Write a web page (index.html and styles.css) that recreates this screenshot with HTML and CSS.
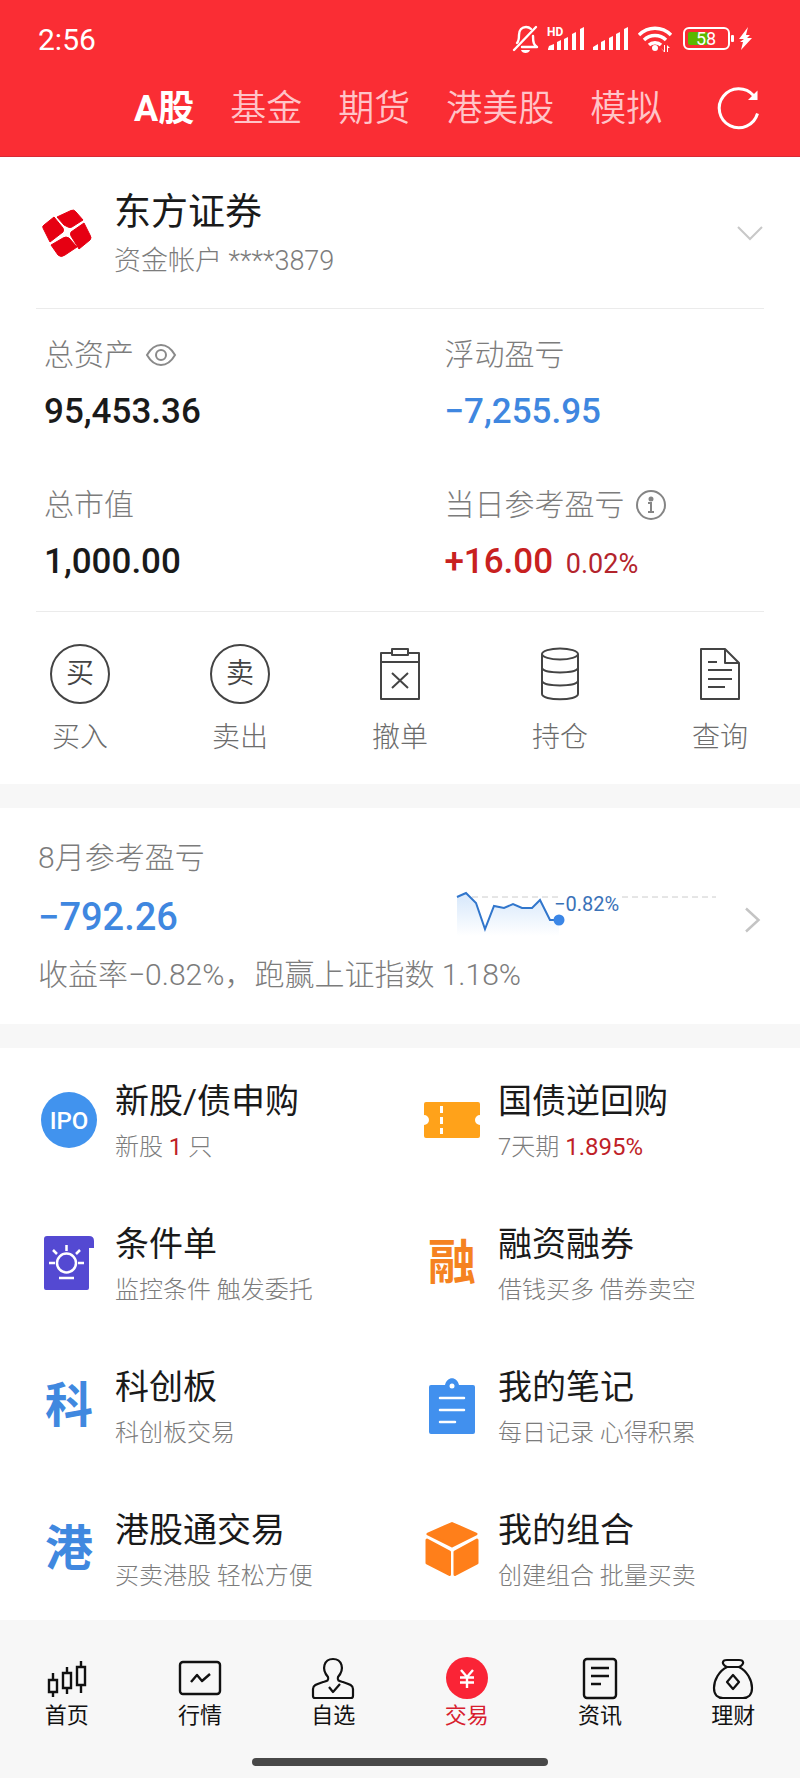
FILE: index.html
```html
<!DOCTYPE html>
<html lang="zh-CN">
<head>
<meta charset="utf-8">
<meta name="viewport" content="width=device-width, initial-scale=1">
<title>交易</title>
<link rel="stylesheet" href="styles.css">
</head>
<body>
<div class="app">
  <header class="header">
    <div class="status">
      <time class="clock">2:56</time>
      <svg class="status-icons" width="246" height="32" viewBox="510 23 246 32" fill="#fff" aria-hidden="true">
        <g fill="none" stroke="#fff" stroke-width="2.4" stroke-linecap="round" stroke-linejoin="round">
          <path d="M517 43c2-2 2-4 2-8 0-5 3-8 7-8 2 0 4 1 5 2"/>
          <path d="M514 50 536 27"/>
          <path d="M522 47h15c-3-2-4-4-4-11"/>
        </g>
        <path d="M521 50h9c-1 4-8 4-9 0z"/>
        <text x="547" y="36" class="status-hd">HD</text>
        <path d="M549 46l5-2v6h-6v-1zM557 42l4-2v10h-4zM564 39l4-2v13h-4zM572 34l4-2v18h-4zM580 29l4-2v23h-4z"/>
        <path d="M593 47l5-3v6h-5zM601 42l4-2v10h-4zM609 38l4-2v14h-4zM616 34l4-2v18h-4zM624 29l4-2v23h-4z"/>
        <g fill="none" stroke="#fff" stroke-width="3.4">
          <path d="M639 35c9-9 23-9 32 0"/>
          <path d="M644 40c6-6 16-6 22 0"/>
          <path d="M649 45c3-3 9-3 12 0"/>
        </g>
        <circle cx="655" cy="48" r="3"/>
        <path d="M661 48l3 3v-6h1v7h-1zM667 52v-7l3 3h-2v4z"/>
        <rect x="684" y="28" width="45" height="21" rx="5" fill="none" stroke="#fff" stroke-width="2"/>
        <rect x="688" y="32" width="20" height="13" rx="2" fill="#5cb800"/>
        <rect x="731" y="35" width="3" height="7" rx="1"/>
        <text x="706" y="45" text-anchor="middle" class="status-level">58</text>
        <path d="M748 27l-9 12h5l-4 3 3 0-2 8 11-12h-5l3-3h-4z"/>
      </svg>
    </div>
    <nav class="tabs">
      <a class="tab tab-active" href="#a">A股</a>
      <a class="tab" href="#fund">基金</a>
      <a class="tab" href="#futures">期货</a>
      <a class="tab" href="#hkus">港美股</a>
      <a class="tab" href="#demo">模拟</a>
      <button class="refresh" type="button" aria-label="刷新">
        <svg width="44" height="44" viewBox="716 86 44 44" fill="none" stroke="#fff" stroke-width="3">
          <path d="M757.500 113.500a19.500 19.500 0 1 1-4-18"/>
          <path d="M757.500 90.500v9.500h-9.500z" fill="#fff" stroke="none"/>
        </svg>
      </button>
    </nav>
  </header>

  <main>
    <section class="panel">
      <button class="account" type="button">
        <svg class="logo" width="50" height="50" viewBox="0 0 50 50" fill="#e60012" stroke="#e60012" stroke-linejoin="round" aria-hidden="true">
          <path d="M16 9 30 2.500Q33 1 35 4l7 8-11 7q-2 1-4 0l-4-2z"/>
          <path d="M3 17l10-8 9 11q1 2 0 4L9 34 2 20q-1-2 1-3z"/>
          <path d="M10 37l12-7q3-2 6 0l8 9-12 8q-4 3-7 0z"/>
          <path d="M43 15l6 12q2 3 0 5L38 41 30 28q-1-2 0-4z"/>
        </svg>
        <span class="account-text">
          <span class="account-name">东方证券</span>
          <span class="account-id">资金帐户 ****3879</span>
        </span>
        <svg class="push" width="26" height="14" viewBox="0 0 26 14" fill="none" stroke="#c8c8c8" stroke-width="2"><path d="M1 1l12 12L25 1"/></svg>
      </button>

      <dl class="metrics">
        <div class="metric">
          <dt>总资产
            <svg width="30" height="22" viewBox="0 0 30 22" fill="none" stroke="#8a8a8a" stroke-width="2"><path d="M1 11C5 4 10 1 15 1s10 3 14 10c-4 7-9 10-14 10S5 18 1 11z"/><circle cx="15" cy="11" r="5"/></svg>
          </dt>
          <dd>95,453.36</dd>
        </div>
        <div class="metric">
          <dt>浮动盈亏</dt>
          <dd class="down">−7,255.95</dd>
        </div>
        <div class="metric">
          <dt>总市值</dt>
          <dd>1,000.00</dd>
        </div>
        <div class="metric">
          <dt>当日参考盈亏
            <svg width="30" height="30" viewBox="0 0 30 30" fill="none" stroke="#858585" stroke-width="2"><circle cx="15" cy="15" r="14"/><path d="M12 13h3v9M12 22h6"/><circle cx="15" cy="9" r="1.500" fill="#858585"/></svg>
          </dt>
          <dd class="up">+16.00 <span class="rate">0.02%</span></dd>
        </div>
      </dl>

      <div class="actions">
        <button class="action" type="button"><span class="action-ring">买</span>买入</button>
        <button class="action" type="button"><span class="action-ring">卖</span>卖出</button>
        <button class="action" type="button">
          <svg width="60" height="60" viewBox="0 0 60 60" fill="none" stroke="#444" stroke-width="2" stroke-linejoin="round"><path d="M22 9H11v46h38V9H38M11 18h38"/><path d="M22 5h16v6H22zM22 29l16 15M38 29 22 44"/></svg>撤单</button>
        <button class="action" type="button">
          <svg width="60" height="60" viewBox="0 0 60 60" fill="none" stroke="#444" stroke-width="2"><ellipse cx="30" cy="10" rx="18" ry="5.500"/><path d="M12 10v40c0 7 36 7 36 0V10M12 24c2 6 34 6 36 0M12 37c2 6 34 6 36 0"/></svg>持仓</button>
        <button class="action" type="button">
          <svg width="60" height="60" viewBox="0 0 60 60" fill="none" stroke="#444" stroke-width="2" stroke-linejoin="round"><path d="M11 5h24l14 14v36H11zM35 5v14h14M18 18h9M18 26h24M18 35h24M18 43h17"/></svg>查询</button>
      </div>
    </section>

    <section class="panel month">
      <h2 class="month-title">8月参考盈亏</h2>
      <div class="month-row">
        <strong class="month-value">−792.26</strong>
        <svg class="chart" width="260" height="50" viewBox="457 892 260 50" aria-hidden="true">
          <defs><linearGradient id="fade" x1="0" y1="0" x2="0" y2="1"><stop offset="0" stop-color="#d9e9fb"/><stop offset="1" stop-color="#fff"/></linearGradient></defs>
          <path d="M457 897l9-4 10 10 9 26 9-23 10 2 9-4 9 4h10l8-8 10 20h9v16H457z" fill="url(#fade)"/>
          <path d="M457 897v39h102v-16h-9l-10-20-8 8h-10l-9-4-9 4-10-2-9 23-9-26z" fill="url(#fade)"/>
          <path d="M472 897h88M622 897h94" stroke="#ccc" stroke-dasharray="6 4" fill="none"/>
          <path d="M457 897l9-4 10 10 9 26 9-23 10 2 9-4 9 4h10l8-8 10 20h9" fill="none" stroke="#3176cc" stroke-width="2"/>
          <circle cx="559" cy="920" r="5.500" fill="#3b86e6"/>
          <text x="554" y="911" class="chart-label">−0.82%</text>
        </svg>
        <svg width="16" height="32" viewBox="745 901 16 32" fill="none" stroke="#c4c4c4" stroke-width="2.500"><path d="M746 908.500 758.500 920 746 931.500"/></svg>
      </div>
      <p class="month-note">收益率−0.82%，跑赢上证指数 1.18%</p>
    </section>

    <section class="panel services">
      <a class="service" href="#ipo">
        <span class="service-icon"><svg width="56" height="56" viewBox="0 0 56 56"><circle cx="28" cy="28" r="28" fill="#4193ee"/><text x="28" y="37" text-anchor="middle" class="ipo">IPO</text></svg></span>
        <span class="service-text"><b>新股/债申购</b><small>新股 <em>1</em> 只</small></span>
      </a>
      <a class="service" href="#bond">
        <span class="service-icon"><svg width="56" height="36" viewBox="0 0 56 36"><path d="M2 0h52q2 0 2 2v11a5 5 0 0 0 0 10v11q0 2-2 2H2q-2 0-2-2V23a5 5 0 0 0 0-10V2q0-2 2-2z" fill="#ffa21a"/><path d="M17.500 4v7M17.500 15v7M17.500 26v6" stroke="#fff" stroke-width="3"/></svg></span>
        <span class="service-text"><b>国债逆回购</b><small>7天期 <em>1.895%</em></small></span>
      </a>
      <a class="service" href="#cond">
        <span class="service-icon"><svg width="52" height="56" viewBox="0 0 52 56"><path d="M4 1h42q5 0 5 5v7h-5v40q0 2-2 2H3q-2 0-2-2V4q0-3 3-3z" fill="#5449d2"/><g fill="none" stroke="#fff" stroke-width="2.500"><circle cx="23.500" cy="28" r="9.500"/><path d="M23.500 10v6M10 15l4 4M37 15l-4 4M6 28h6M35 28h6M16 43h15"/></g></svg></span>
        <span class="service-text"><b>条件单</b><small>监控条件 触发委托</small></span>
      </a>
      <a class="service" href="#margin">
        <span class="service-icon glyph glyph-orange">融</span>
        <span class="service-text"><b>融资融券</b><small>借钱买多 借券卖空</small></span>
      </a>
      <a class="service" href="#star">
        <span class="service-icon glyph glyph-blue">科</span>
        <span class="service-text"><b>科创板</b><small>科创板交易</small></span>
      </a>
      <a class="service" href="#notes">
        <span class="service-icon"><svg width="46" height="56" viewBox="0 0 46 56"><path d="M2 7h14C18-2 28-2 30 7h14q2 0 2 2v45q0 2-2 2H2q-2 0-2-2V9q0-2 2-2z" fill="#4190ee"/><circle cx="23" cy="8" r="2.500" fill="#fff"/><path d="M11 20h24M11 32h24M11 44h15" stroke="#fff" stroke-width="2.500" stroke-linecap="round"/></svg></span>
        <span class="service-text"><b>我的笔记</b><small>每日记录 心得积累</small></span>
      </a>
      <a class="service" href="#hk">
        <span class="service-icon glyph glyph-blue">港</span>
        <span class="service-text"><b>港股通交易</b><small>买卖港股 轻松方便</small></span>
      </a>
      <a class="service" href="#group">
        <span class="service-icon"><svg width="54" height="56" viewBox="0 0 54 56" fill="#ff7f1a" stroke="#ff7f1a" stroke-width="3" stroke-linejoin="round"><path d="M27 2.500 51 13 27 25 3 13zM2 19l22.500 12v22.500L2 42zM52 19 30 31v22.500L52 42z"/></svg></span>
        <span class="service-text"><b>我的组合</b><small>创建组合 批量买卖</small></span>
      </a>
    </section>
  </main>

  <footer class="footer">
    <nav class="dock">
      <a class="dock-item" href="#home"><svg width="44" height="44" viewBox="0 0 44 44" fill="none" stroke="#111" stroke-width="2.400"><path d="M4 24h8v12H4zM8 17v7M8 36v5M18 17h8v15h-8zM22 11v6M22 32v6M32 11h8v18h-8zM36 5v6M36 29v8"/></svg>首页</a>
      <a class="dock-item" href="#market"><svg width="44" height="44" viewBox="0 0 44 44" fill="none" stroke="#111" stroke-width="2.400" stroke-linejoin="round"><rect x="2" y="6" width="40" height="32" rx="3"/><path d="M13 26l6-7 5 6 8-7"/></svg>行情</a>
      <a class="dock-item" href="#watch"><svg width="44" height="44" viewBox="0 0 44 44" fill="none" stroke="#111" stroke-width="2.200" stroke-linejoin="round"><path d="M17 21C10 13 13 3 22 3s12 10 5 18c-1 4 1 4 5 5 6 2 10 3 10 7v7q0 2-2 2H4q-2 0-2-2v-7c0-4 4-5 10-7 4-1 6-1 5-5z"/><path d="M18 31l4 5 7-8"/></svg>自选</a>
      <a class="dock-item dock-active" href="#trade" aria-current="page"><svg width="44" height="44" viewBox="0 0 44 44"><circle cx="22" cy="22" r="21" fill="#fa2436"/><path d="M16 14l6 7 6-7M15 21.500h14M15 26.500h14M22 21v11" fill="none" stroke="#fff" stroke-width="2.400"/></svg>交易</a>
      <a class="dock-item" href="#news"><svg width="44" height="44" viewBox="0 0 44 44" fill="none" stroke="#111" stroke-width="2.400"><rect x="6" y="3" width="32" height="39" rx="3"/><path d="M13 12h18M13 20h18M13 28h10"/></svg>资讯</a>
      <a class="dock-item" href="#wealth"><svg width="44" height="44" viewBox="0 0 44 44" fill="none" stroke="#111" stroke-width="2.200" stroke-linejoin="round"><path d="M16 11c-6-3-5-7 0-7h12c5 0 6 4 0 7zM16 11C8 15 3 24 3 32c0 7 4 10 9 10h20c5 0 9-3 9-10 0-8-5-17-13-21"/><path d="M22 19l6 7-6 7-6-7z"/></svg>理财</a>
    </nav>
    <div class="home-bar"></div>
  </footer>
</div>
</body>
</html>
```
FILE: styles.css
```css
* { box-sizing: border-box; }
body {
  margin: 0;
  background: #f7f7f7;
  color: #1a1a1a;
  font-family: Roboto, "Noto Sans CJK SC", sans-serif;
  font-weight: 300;
}
a { color: inherit; text-decoration: none; }
button { border: 0; padding: 0; background: none; color: inherit; font: inherit; cursor: pointer; }
svg { display: block; flex: none; overflow: visible; }

.header { background: #fa2d34; color: #fff; padding: 6px 0 12px; border-bottom: 1px solid #d62a35; }
.status { display: flex; align-items: center; justify-content: space-between; height: 66px; padding: 0 44px 0 38px; }
.clock { font-size: 30px; font-weight: 400; }
.status-hd { font-size: 12px; font-weight: 700; }
.status-level { font-size: 18px; font-weight: 400; }
.tabs { display: flex; align-items: center; gap: 36px; height: 72px; padding: 0 40px 0 134px; }
.tab { padding-top: 2px; font-size: 36px; line-height: 48px; font-weight: 350; white-space: nowrap; color: #ffc4c8; }
.tab-active { font-weight: 700; color: #fff; }
.refresh { margin-left: auto; }

.panel { background: #fff; }
.panel + .panel { margin-top: 24px; }

.account { display: flex; align-items: center; width: 100%; min-height: 151px; padding: 0 37px 0 41px; text-align: left; }
.account-text { display: flex; flex-direction: column; margin-left: 23px; padding-top: 8px; }
.account-name { font-size: 37px; line-height: 48px; font-weight: 400; }
.account-id { font-size: 27px; line-height: 48px; color: #7c7c7c; }
.push { margin-left: auto; }

.metrics {
  display: grid;
  grid-template-columns: 11fr 9fr;
  margin: 0 36px;
  border-top: 1px solid #ebebeb;
  border-bottom: 1px solid #ebebeb;
}
.metric { padding: 26px 0 22px 8px; }
.metric dt { display: flex; align-items: center; gap: 12px; font-size: 30px; line-height: 40px; color: #7c7c7c; }
.metric dd { margin: 12px 0 0; font-size: 35px; line-height: 50px; font-weight: 500; }
.metric .down, .month-value { color: #3f87e0; }
.metric .up { color: #c8211f; }
.rate { margin-left: 4px; font-size: 27px; font-weight: 400; color: #b3242c; }

.actions { display: grid; grid-template-columns: repeat(5, 1fr); padding: 32px 0 28px; }
.action { display: flex; flex-direction: column; align-items: center; gap: 16px; font-size: 28px; line-height: 36px; color: #6c6c6c; }
.action-ring { width: 60px; height: 60px; border: 2px solid #444; border-radius: 50%; font-size: 28px; line-height: 56px; font-weight: 350; color: #444; }

.month { padding: 26px 39px 26px 38px; }
.month-title { margin: 0; font-size: 30px; line-height: 48px; font-weight: 300; color: #7c7c7c; }
.month-row { display: flex; align-items: center; height: 70px; }
.month-value { font-size: 38px; font-weight: 500; }
.chart { margin: 0 28px 0 auto; }
.chart-label { font-size: 20px; font-weight: 400; fill: #3a72b8; }
.month-note { margin: 0; font-size: 30px; line-height: 46px; color: #7c7c7c; }

.services { display: grid; grid-template-columns: 1fr 1fr; padding-left: 34px; }
.service { display: flex; align-items: center; gap: 11px; height: 143px; }
.service-icon { display: flex; align-items: center; justify-content: center; width: 70px; }
.service-text { display: flex; flex-direction: column; padding-top: 6px; white-space: nowrap; }
.service-text b { font-size: 34px; line-height: 48px; font-weight: 400; }
.service-text small { font-size: 24px; line-height: 44px; color: #7c7c7c; }
.service-text em { font-style: normal; font-weight: 400; color: #c01f28; }
.ipo { font-size: 24px; font-weight: 500; fill: #fff; }
.glyph { font-size: 48px; line-height: 56px; font-weight: 700; }
.glyph-orange { color: #f58220; }
.glyph-blue { color: #4088df; }

.footer { padding: 36px 0 12px; }
.dock { display: grid; grid-template-columns: repeat(6, 1fr); }
.dock-item { display: flex; flex-direction: column; align-items: center; gap: 2px; font-size: 22px; line-height: 28px; font-weight: 400; color: #111; }
.dock-active { color: #d8202f; }
.home-bar { width: 37%; height: 8px; margin: 28px auto 0; border-radius: 4px; background: #484848; }
```
